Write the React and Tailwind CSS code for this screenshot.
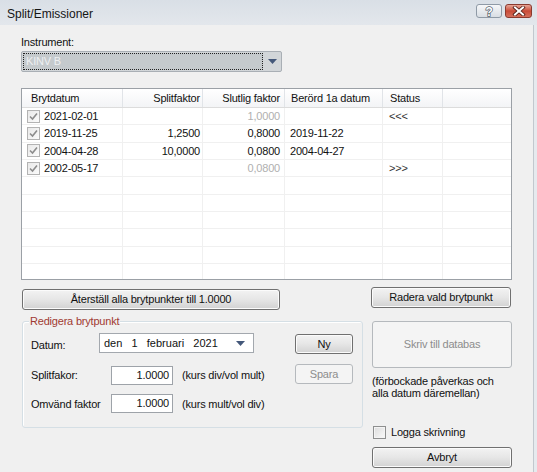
import React from "react";

const COLS = [101, 80, 82, 98, 60, 68];

function ListCheck() {
  return (
    <span className="w-[13px] h-[13px] shrink-0 border border-[#b3b3b3] bg-gradient-to-br from-[#e9e9e9] to-[#fbfbfb] flex items-center justify-center">
      <svg width="9" height="9" viewBox="0 0 9 9">
        <path d="M1 4.5 L3.5 7 L8 1.5" fill="none" stroke="#8c8c8c" strokeWidth="1.6" />
      </svg>
    </span>
  );
}

function Btn({ children, className = "", disabled = false }) {
  return (
    <div
      className={
        "flex items-center justify-center rounded-[3px] border " +
        (disabled
          ? "border-[#b5b9bd] bg-[#f4f4f4] text-[#8d8d8d] "
          : "border-[#707070] bg-gradient-to-b from-[#f3f3f3] via-[#e6e6e6] to-[#d2d2d2] text-[#111] shadow-[inset_0_0_0_1px_#fbfbfb] ") +
        className
      }
    >
      {children}
    </div>
  );
}

const rows = [
  { d: "2021-02-01", s: "", f: "1,0000", fg: true, b: "", st: "<<<" },
  { d: "2019-11-25", s: "1,2500", f: "0,8000", fg: false, b: "2019-11-22", st: "" },
  { d: "2004-04-28", s: "10,0000", f: "0,0800", fg: false, b: "2004-04-27", st: "" },
  { d: "2002-05-17", s: "", f: "0,0800", fg: true, b: "", st: ">>>" },
  null, null, null, null, null, null,
];

export default function App() {
  return (
    <div className="w-[537px] h-[472px] bg-[#f0f0f0] flex flex-col overflow-hidden font-['Liberation_Sans',Arial,sans-serif] text-[11px] text-[#111] tracking-[-0.2px]">
      {/* Title bar */}
      <div className="h-[25px] shrink-0 flex items-start bg-gradient-to-b from-[#d9dfe6] to-[#e3e7ec] pl-[7px] pr-[5px] pt-[4px]">
        <span className="flex-1 text-[12px] leading-[15px] mt-[3px] tracking-normal text-[#151515]">Split/Emissioner</span>
        <div className="w-[26px] h-[14px] rounded-[3px] border border-[#8f9aa6] bg-gradient-to-b from-[#f6f7f9] to-[#d9dee4] flex items-center justify-center mr-[3px]">
          <svg width="12" height="12" viewBox="0 0 12 12">
            <text x="6" y="10.5" textAnchor="middle" fontSize="12" fontWeight="bold" fontFamily="Liberation Sans, Arial, sans-serif" fill="#ffffff" stroke="#55606c" strokeWidth="1.4" paintOrder="stroke">?</text>
          </svg>
        </div>
        <div className="w-[27px] h-[14px] rounded-[3px] border border-[#8a3a2f] bg-gradient-to-b from-[#e6a597] via-[#c84a37] to-[#d56f5c] flex items-center justify-center">
          <svg width="14" height="10" viewBox="0 0 14 10">
            <path d="M3 1.5 L11 8.5 M11 1.5 L3 8.5" stroke="#4a1a14" strokeWidth="3.6" strokeLinecap="square" />
            <path d="M3 1.5 L11 8.5 M11 1.5 L3 8.5" stroke="#ffffff" strokeWidth="2" strokeLinecap="square" />
          </svg>
        </div>
      </div>

      <div className="flex-1 flex">
        {/* Main */}
        <div className="w-[533px] flex flex-col pl-[21px]">
          <div className="mt-[11px] h-[13px] leading-[13px]">Instrument:</div>

          {/* Combo */}
          <div className="mt-[2px] w-[261px] h-[21px] rounded-[2px] border border-[#a9afb5] bg-[#d2d6d9] flex items-center pl-[1px]">
            <div className="w-[240px] h-[17px] border border-dotted border-[#222] bg-[#c5cacd] flex items-center pl-[2px] text-[#eef0f2]">KINV B</div>
            <div className="flex-1 flex items-center justify-center">
              <svg width="9" height="5" viewBox="0 0 9 5">
                <polygon points="0,0 9,0 4.5,5" fill="#44587a" />
              </svg>
            </div>
          </div>

          {/* List */}
          <div className="mt-[16px] w-[491px] h-[192px] border border-[#9ba0a6] bg-white overflow-hidden flex flex-col">
            <div className="h-[19px] shrink-0 flex bg-gradient-to-b from-white to-[#f3f4f6] border-b border-[#dcdcdc]">
              <div className="w-[101px] border-r border-[#e1e4e8] flex items-center pl-[9px]">Brytdatum</div>
              <div className="w-[80px] border-r border-[#e1e4e8] flex items-center justify-end pr-[2px]">Splitfaktor</div>
              <div className="w-[82px] border-r border-[#e1e4e8] flex items-center justify-end pr-[4px]">Slutlig faktor</div>
              <div className="w-[98px] border-r border-[#e1e4e8] flex items-center pl-[6px]">Berörd 1a datum</div>
              <div className="w-[60px] border-r border-[#e1e4e8] flex items-center pl-[7px]">Status</div>
              <div className="flex-1" />
            </div>
            {rows.map((r, i) => (
              <div key={i} className="h-[17.35px] shrink-0 flex border-b border-[#f0f0f0]">
                <div className="w-[101px] border-r border-[#f0f0f0] flex items-center pl-[5px]">
                  {r && (
                    <>
                      <ListCheck />
                      <span className="ml-[4px]">{r.d}</span>
                    </>
                  )}
                </div>
                <div className="w-[80px] border-r border-[#f0f0f0] flex items-center justify-end pr-[2px]">{r && r.s}</div>
                <div className={"w-[82px] border-r border-[#f0f0f0] flex items-center justify-end pr-[4px] " + (r && r.fg ? "text-[#b0b0b0]" : "")}>{r && r.f}</div>
                <div className="w-[98px] border-r border-[#f0f0f0] flex items-center pl-[5px]">{r && r.b}</div>
                <div className="w-[60px] border-r border-[#f0f0f0] flex items-center pl-[6px] text-[#333]">{r && r.st}</div>
                <div className="flex-1" />
              </div>
            ))}
          </div>

          {/* Buttons row */}
          <div className="mt-[7px] flex items-start">
            <Btn className="ml-[1px] mt-[2px] w-[258px] h-[21px]">Återställ alla brytpunkter till 1.0000</Btn>
            <Btn className="ml-[91px] w-[140px] h-[21px]">Radera vald brytpunkt</Btn>
          </div>

          {/* Lower area */}
          <div className="mt-[11px] flex items-start">
            {/* Group box */}
            <div className="relative ml-[1px] w-[341px] h-[107px] rounded-[3px] border border-[#d5dfe5] shadow-[inset_1px_1px_0_#ffffff]">
              <span className="absolute left-[6px] top-[-8px] px-[1px] bg-[#f0f0f0] text-[#a03a32] leading-[14px]">Redigera brytpunkt</span>

              <div className="mt-[11px] h-[21px] flex items-start pl-[8px]">
                <span className="w-[68px] mt-[5px] leading-[14px]">Datum:</span>
                <div className="w-[155px] h-[20px] border border-[#a3a8ae] bg-white flex items-center pl-[4px] pr-[8px]">
                  <span className="flex-1 tracking-normal whitespace-pre">den   1   februari   2021</span>
                  <svg width="9" height="5" viewBox="0 0 9 5">
                    <polygon points="0,0 9,0 4.5,5" fill="#44587a" />
                  </svg>
                </div>
                <Btn className="ml-[41px] mt-[1px] w-[58px] h-[20px]">Ny</Btn>
              </div>

              <div className="mt-[10px] h-[21px] flex items-start pl-[8px]">
                <span className="w-[80px] mt-[4px] leading-[14px]">Splitfakor:</span>
                <div className="w-[62px] h-[19px] mt-[2px] border border-[#9ea3a9] bg-white flex items-center justify-end pr-[3px]">1.0000</div>
                <span className="ml-[9px] w-[113px] mt-[4px] leading-[14px]">(kurs div/vol mult)</span>
                <Btn disabled className="w-[58px] h-[20px]">Spara</Btn>
              </div>

              <div className="mt-[9px] h-[20px] flex items-start pl-[8px]">
                <span className="w-[80px] mt-[3px] leading-[14px]">Omvänd faktor</span>
                <div className="w-[62px] h-[19px] border border-[#9ea3a9] bg-white flex items-center justify-end pr-[3px]">1.0000</div>
                <span className="ml-[9px] mt-[3px] leading-[14px]">(kurs mult/vol div)</span>
              </div>
            </div>

            {/* Right column */}
            <div className="ml-[9px] w-[140px] flex flex-col">
              <Btn disabled className="w-[140px] h-[47px]">Skriv till databas</Btn>
              <div className="mt-[7px] leading-[12px]">
                (förbockade påverkas och
                <br />
                alla datum däremellan)
              </div>
              <div className="mt-[27px] h-[13px] flex items-center">
                <span className="w-[13px] h-[13px] ml-[1px] border border-[#8e8f8f] bg-gradient-to-br from-[#dcdcdc] to-[#fafafa] shadow-[inset_0_0_0_1px_#f4f4f4]" />
                <span className="ml-[5px]">Logga skrivning</span>
              </div>
              <Btn className="mt-[8px] w-[140px] h-[21px]">Avbryt</Btn>
            </div>
          </div>
        </div>

        {/* Right window frame */}
        <div className="w-[4px] border-l border-[#c2c8ce] bg-[#e6eaee]" />
      </div>
    </div>
  );
}
